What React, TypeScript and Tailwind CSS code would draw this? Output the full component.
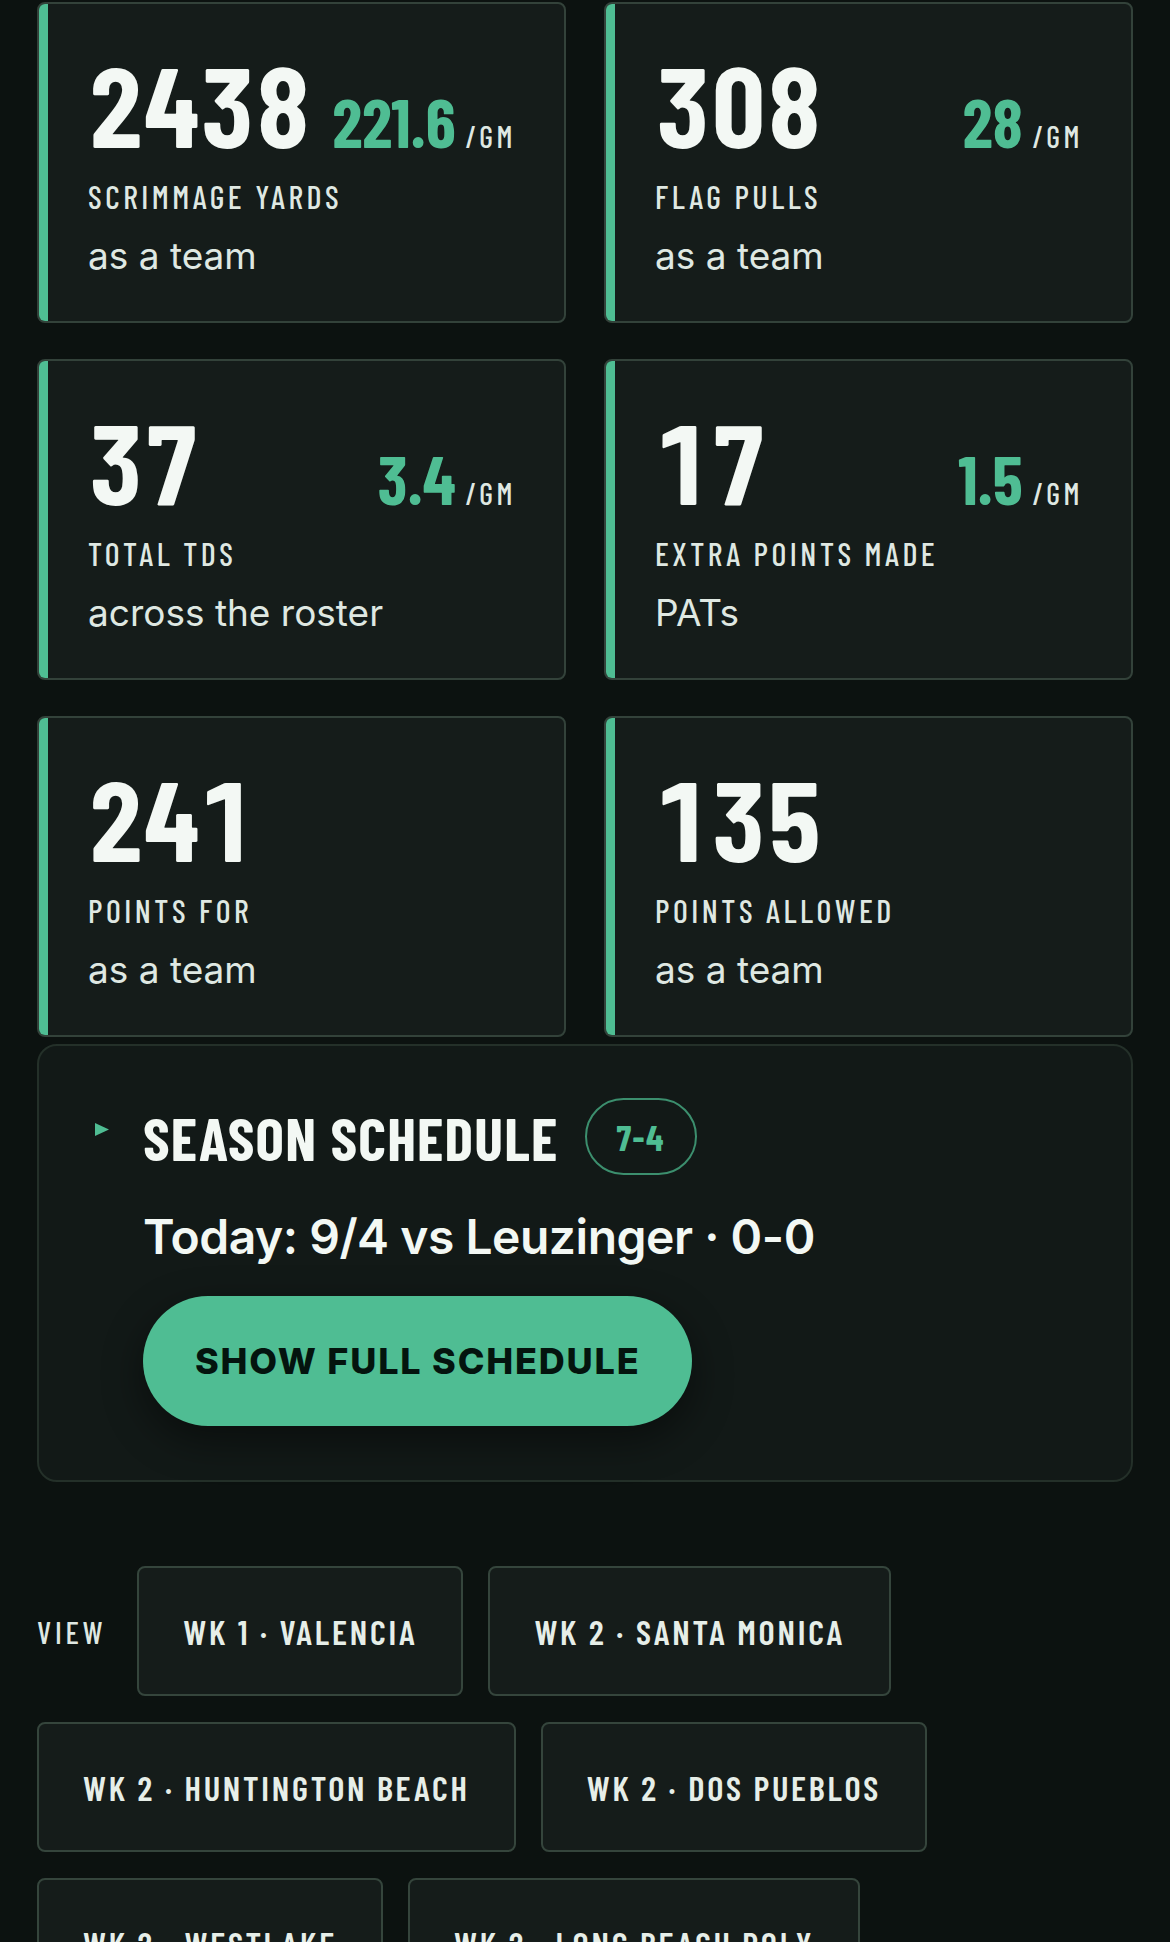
type Stat = {
  value: string;
  label: string;
  sub: string;
  perGame?: string;
};

const stats: Stat[] = [
  { value: "2438", perGame: "221.6", label: "Scrimmage Yards", sub: "as a team" },
  { value: "308", perGame: "28", label: "Flag Pulls", sub: "as a team" },
  { value: "37", perGame: "3.4", label: "Total TDs", sub: "across the roster" },
  { value: "17", perGame: "1.5", label: "Extra Points Made", sub: "PATs" },
  { value: "241", label: "Points For", sub: "as a team" },
  { value: "135", label: "Points Allowed", sub: "as a team" },
];

const games = [
  "WK 1 · Valencia",
  "WK 2 · Santa Monica",
  "WK 2 · Huntington Beach",
  "WK 2 · Dos Pueblos",
  "WK 2 · Westlake",
  "WK 2 · Long Beach Poly",
];

const cond = "font-['Barlow_Condensed',_'Roboto',_sans-serif]";
const body = "font-['Inter',_'Roboto',_sans-serif]";

function StatCard({ stat }: { stat: Stat }) {
  return (
    <div className="relative overflow-hidden rounded-lg border-2 border-[#33423a] bg-[#151c1a] pl-[49px] pr-[48px] pt-[43px] pb-[47px]">
      {/* accent strip */}
      <div className="absolute left-0 top-0 bottom-0 w-[9px] rounded-tl-[4px] bg-[#4fbd93]" />
      <div className="flex items-baseline justify-between">
        <span className={`${cond} text-[112px] font-bold tabular-nums leading-none text-[#f3f8f4]`}>
          {stat.value}
        </span>
        {stat.perGame && (
          <span className="flex items-baseline">
            <span className={`${cond} text-[68px] font-bold leading-none text-[#4fbd93]`}>{stat.perGame}</span>
            <span className={`${cond} ml-[10px] text-[30px] font-medium leading-none tracking-[0.12em] text-[#dfe8e2]`}>
              /GM
            </span>
          </span>
        )}
      </div>
      <div className={`${cond} mt-[21px] text-[32px] font-medium uppercase leading-none tracking-[0.11em] text-[#dfe8e2]`}>
        {stat.label}
      </div>
      <div className={`${body} mt-[25px] text-[37px] leading-none text-[#dfe8e2]`}>{stat.sub}</div>
    </div>
  );
}

export default function App() {
  return (
    <div className="min-h-screen bg-[#0c1210] px-[37px] pt-[2px] pb-10">
      <div className="grid grid-cols-2 gap-x-[38px] gap-y-[36px]">
        {stats.map((s) => (
          <StatCard key={s.label} stat={s} />
        ))}
      </div>

      {/* Season schedule */}
      <div className="mt-[7px] flex rounded-[20px] border-2 border-[#243029] bg-[#121917] pl-[56px] pr-10 pt-[52px] pb-[54px]">
        <svg width="14" height="13" viewBox="0 0 14 13" className="mt-[25px] shrink-0">
          <path d="M0 0 L14 6.5 L0 13 Z" fill="#4fbd93" />
        </svg>
        <div className="ml-[34px] flex flex-col items-start">
          <div className="flex items-center">
            <h2 className={`${cond} text-[60px] font-bold uppercase leading-none tracking-[0.02em] text-[#f3f8f4]`}>
              Season Schedule
            </h2>
            <span
              className={`${cond} ml-[26px] flex h-[77px] items-center rounded-full border-2 border-[#3c8f6e] px-[30px] text-[36px] font-bold leading-none tracking-[0.04em] text-[#4fbd93]`}
            >
              7-4
            </span>
          </div>
          <p className={`${body} mt-[38px] text-[48px] font-semibold leading-none tracking-[-0.01em] text-[#f3f8f4]`}>
            Today: 9/4 vs Leuzinger · 0-0
          </p>
          <button
            className={`${body} mt-[35px] h-[130px] rounded-full bg-[#4fbd93] px-[52px] text-[36px] font-extrabold uppercase tracking-[0.05em] text-[#04140e] shadow-[0_14px_40px_rgba(0,0,0,0.45)]`}
          >
            Show full schedule
          </button>
        </div>
      </div>

      {/* Game picker */}
      <div className="mt-[84px] flex flex-wrap items-center gap-x-[25px] gap-y-[26px]">
        <span className={`${cond} mr-[6px] text-[31px] font-medium uppercase leading-none tracking-[0.12em] text-[#dfe8e2]`}>
          View
        </span>
        {games.map((g) => (
          <button
            key={g}
            className={`${cond} h-[130px] rounded-lg border-2 border-[#35453c] bg-[#151c1a] px-[44px] text-[34.5px] font-semibold uppercase leading-none tracking-[0.08em] text-[#e6eee8]`}
          >
            {g}
          </button>
        ))}
      </div>
    </div>
  );
}
